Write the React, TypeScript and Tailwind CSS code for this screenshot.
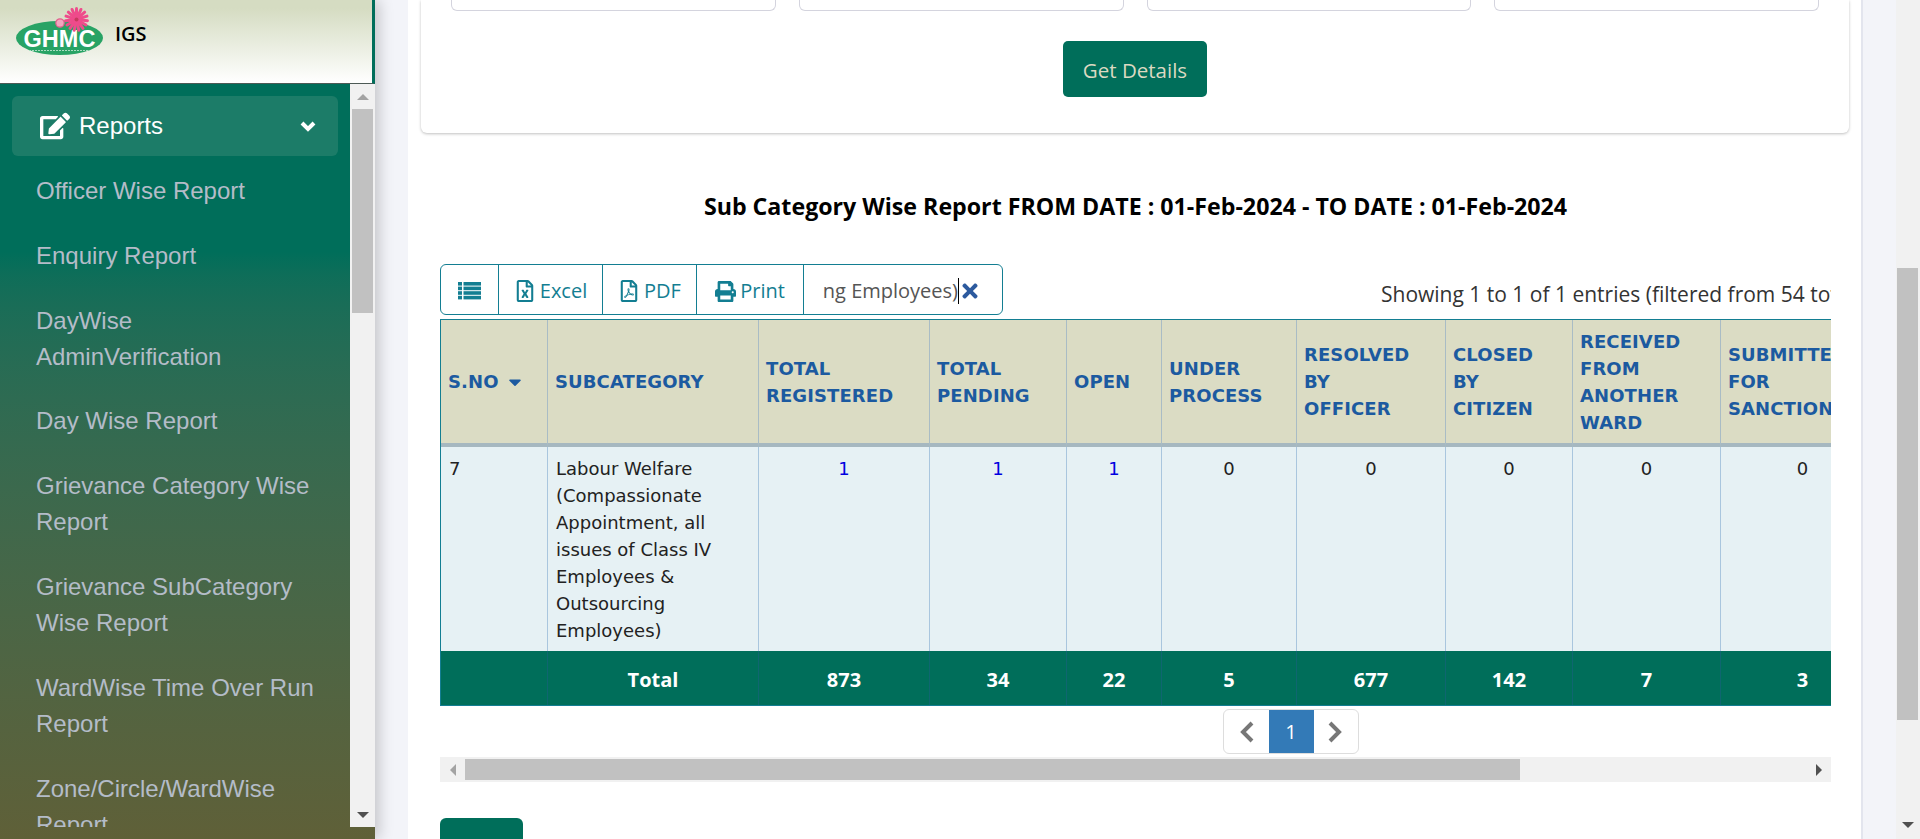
import { FaEdit, FaRegFileExcel, FaRegFilePdf, FaPrint, FaTimes, FaCaretDown } from "react-icons/fa";

const menuItems = [
  { id: 1, label: "Officer Wise Report" },
  { id: 2, label: "Enquiry Report" },
  { id: 3, label: "DayWise AdminVerification" },
  { id: 4, label: "Day Wise Report" },
  { id: 5, label: "Grievance Category Wise Report" },
  { id: 6, label: "Grievance SubCategory Wise Report" },
  { id: 7, label: "WardWise Time Over Run Report" },
  { id: 8, label: "Zone/Circle/WardWise Report" },
];

const columns = [
  { w: "w-[108px]", lines: ["S.NO"], val: "7", total: "" },
  { w: "w-[211px]", lines: ["SUBCATEGORY"], val: "", total: "Total" },
  { w: "w-[171px]", lines: ["TOTAL", "REGISTERED"], val: "1", total: "873", link: true },
  { w: "w-[137px]", lines: ["TOTAL", "PENDING"], val: "1", total: "34", link: true },
  { w: "w-[95px]", lines: ["OPEN"], val: "1", total: "22", link: true },
  { w: "w-[135px]", lines: ["UNDER", "PROCESS"], val: "0", total: "5" },
  { w: "w-[149px]", lines: ["RESOLVED", "BY", "OFFICER"], val: "0", total: "677" },
  { w: "w-[127px]", lines: ["CLOSED", "BY", "CITIZEN"], val: "0", total: "142" },
  { w: "w-[148px]", lines: ["RECEIVED", "FROM", "ANOTHER", "WARD"], val: "0", total: "7" },
  { w: "w-[164px]", lines: ["SUBMITTED", "FOR", "SANCTION"], val: "0", total: "3" },
];

const petals = [0, 24, 48, 72, 96, 120, 144, 168, 192, 216, 240, 264, 288, 312, 336];

const Logo = () => (
  <svg width="90" height="56" viewBox="0 0 90 56" className="shrink-0">
    <ellipse cx="44.5" cy="31" rx="43.5" ry="17" fill="#28a365" />
    <text x="44.5" y="40" textAnchor="middle" fontFamily="Liberation Sans, sans-serif" fontWeight="700" fontSize="23.5" fill="#fff">GHMC</text>
    <line x1="14" y1="43.5" x2="75" y2="43.5" stroke="#a8dcc0" strokeWidth="1" strokeDasharray="2 1" />
    <g stroke="#ee4b8b" strokeWidth="3" strokeLinecap="round">
      {petals.map((a) => (
        <line key={a} x1="61.5" y1="8" x2="61.5" y2="1.5" transform={`rotate(${a} 61.5 12.5)`} />
      ))}
    </g>
    <circle cx="61.5" cy="12.5" r="5" fill="#ee4b8b" />
    <circle cx="61.5" cy="12.5" r="2" fill="#c8395f" />
    <circle cx="45" cy="16" r="4.2" fill="#f3a5bf" stroke="#e2608c" strokeWidth="1.2" />
  </svg>
);

const ListIcon = () => (
  <svg width="23" height="18" viewBox="0 0 23 18" fill="currentColor">
    {[0, 4.6, 9.2, 13.8].map((y) => (
      <g key={y}>
        <rect x="0" y={y} width="4" height="3.6" />
        <rect x="5.5" y={y} width="17.5" height="3.6" />
      </g>
    ))}
  </svg>
);

const Chevron = ({ points, w, h }: { points: string; w: number; h: number }) => (
  <svg width={w} height={h} viewBox={`0 0 ${w} ${h}`} fill="none" stroke="currentColor" strokeWidth="4">
    <polyline points={points} />
  </svg>
);

export default function App() {
  return (
    <div className="flex h-[839px] overflow-hidden bg-[#f3f4f9] font-['Open_Sans',sans-serif]">
      <aside className="relative z-10 flex w-[375px] shrink-0 flex-col bg-gradient-to-b from-[#006e5a] from-30% to-[#5f6038] shadow-[4px_0_14px_rgba(0,0,0,0.2)]">
        <div className="flex h-[84px] items-start border-b border-b-[#4d5a56] border-r-[3px] border-r-[#006e5a] bg-gradient-to-b from-[#d5dcc2] from-10% to-white pl-[15px] pt-[7px]">
          <Logo />
          <span className="ml-[10px] mt-[15px] text-[20px] font-semibold leading-6 text-black">IGS</span>
        </div>
        <div className="flex h-[743px] overflow-hidden">
          <nav className="w-[350px] shrink-0 overflow-hidden pl-3 pr-3 pt-3 font-['Liberation_Sans',sans-serif]">
            <div className="flex h-[60px] items-center justify-between rounded-md bg-[#1c7c68] pl-7 pr-[22px] text-[24px] text-white">
              <span className="flex items-center gap-[9px]">
                <FaEdit className="text-[30px]" />
                Reports
              </span>
              <Chevron points="2,2 8,8 14,2" w={16} h={11} />
            </div>
            <ul className="w-[304px] pl-6 pt-[17px]">
              {menuItems.map((item) => (
                <li key={item.id} className="pb-[28.8px] text-[24px] leading-9 text-[#b4bcc8]">
                  {item.label}
                </li>
              ))}
            </ul>
          </nav>
          <div className="flex w-[25px] shrink-0 flex-col bg-[#f1f1f1] px-[2px]">
            <div className="flex h-[25px] items-center justify-center">
              <div className="h-0 w-0 border-x-[6px] border-b-[6px] border-x-transparent border-b-[#a3a3a3]" />
            </div>
            <div className="h-[204px] bg-[#c1c1c1]" />
            <div className="flex-1" />
            <div className="flex h-[25px] items-center justify-center">
              <div className="h-0 w-0 border-x-[6px] border-t-[6px] border-x-transparent border-t-[#505050]" />
            </div>
          </div>
        </div>
      </aside>

      <main className="ml-[33px] h-[839px] w-[1455px] shrink-0 overflow-hidden border-r-2 border-[#e3e5ee] bg-white">
        <div className="ml-[13px] mr-[12px] h-[133px] rounded-b-md bg-white px-[30px] shadow-[0_1px_3px_rgba(0,0,0,0.25)]">
          <div className="grid grid-cols-4 gap-[23px]">
            {[1, 2, 3, 4].map((n) => (
              <div key={n} className="h-[11px] rounded-b-md border border-t-0 border-[#d4d4de]" />
            ))}
          </div>
          <div className="flex justify-center pt-[30px]">
            <button className="h-[56px] w-[144px] rounded-[5px] bg-[#006e5a] pt-[2px] text-[20.5px] text-[#dbd9c2]">Get Details</button>
          </div>
        </div>

        <div className="ml-[32px] w-[1391px]">
          <h2 className="pt-[58px] text-center text-[23.2px] font-bold leading-[30px] text-black">
            Sub Category Wise Report FROM DATE : 01-Feb-2024 - TO DATE : 01-Feb-2024
          </h2>

          <div className="mt-[43px] flex items-end justify-between">
            <div className="flex h-[51px] w-[563px] rounded-md border border-[#137e92] text-[20px] text-[#137e92]">
              <div className="flex w-[58px] items-center justify-center border-r border-[#137e92] pt-[3px]"><ListIcon /></div>
              <div className="flex w-[104px] items-center justify-center gap-1 border-r border-[#137e92] pt-[3px]"><FaRegFileExcel className="text-[22px]" />Excel</div>
              <div className="flex w-[94px] items-center justify-center gap-1 border-r border-[#137e92] pt-[3px]"><FaRegFilePdf className="text-[22px]" />PDF</div>
              <div className="flex w-[107px] items-center justify-center gap-1 border-r border-[#137e92] pt-[3px]"><FaPrint className="text-[21px]" />Print</div>
              <div className="flex flex-1 items-center pl-[17px] pt-[3px] text-[#555]">
                <span className="w-[137px] whitespace-nowrap text-right">ng Employees)</span>
                <span className="h-[26px] w-px bg-black" />
                <FaTimes className="text-[22px] text-[#2c5a9e]" />
              </div>
            </div>
            <div className="w-[450px] overflow-hidden whitespace-nowrap pb-[7px] text-[21px] leading-7 text-[#333]">
              Showing 1 to 1 of 1 entries (filtered from 54 total entries)
            </div>
          </div>

          <div className="mt-1 flex overflow-hidden border-y border-[#137e92] font-['DejaVu_Sans',sans-serif]">
            {columns.map((c, i) => (
              <div key={i} className={`${c.w} shrink-0 overflow-hidden first:border-l first:border-l-[#137e92]`}>
                <div className="flex h-[127px] items-center whitespace-nowrap border-b-[4px] border-r border-b-[#a6b8c0] border-r-[#a9bcc5] bg-[#dbdcc4] pl-[7px] text-[18px] font-bold leading-[27px] tracking-[0.1px] text-[#1c5aa0]">
                  <div>
                    {c.lines.map((l) => (
                      <div key={l} className="flex items-center gap-[6px]">
                        {l}
                        {i === 0 && <FaCaretDown className="text-[20px]" />}
                      </div>
                    ))}
                  </div>
                </div>
                <div className="h-[204px] border-r border-[#a9c6de] bg-[#e6f1f4] px-2 pt-2 text-[18px] leading-[27px] text-[#222]">
                  {i === 1 ? (
                    <p>Labour Welfare (Compassionate Appointment, all issues of Class IV Employees &amp; Outsourcing Employees)</p>
                  ) : (
                    <p className={`${i === 0 ? "" : "text-center"} ${c.link ? "text-[#0000e0]" : ""}`}>{c.val}</p>
                  )}
                </div>
                <div className="flex h-[54px] items-center justify-center border-r border-[#0f6670] bg-[#006e5a] pt-[3px] font-['Open_Sans',sans-serif] text-[20px] font-bold text-white">
                  {c.total}
                </div>
              </div>
            ))}
          </div>

          <div className="h-[51px] pl-[783px] pt-[3px]">
            <div className="flex h-[45px] w-[136px] items-stretch overflow-hidden rounded-md border border-[#dddddd] text-[#777]">
              <div className="flex flex-1 items-center justify-center"><Chevron points="13,2 4,11 13,20" w={15} h={22} /></div>
              <div className="flex w-[45px] items-center justify-center bg-[#337ab7] text-[20px] text-white">1</div>
              <div className="flex flex-1 items-center justify-center"><Chevron points="2,2 11,11 2,20" w={15} h={22} /></div>
            </div>
          </div>

          <div className="flex h-[25px] items-center bg-[#f1f1f1] py-[2px]">
            <div className="flex w-[25px] items-center justify-center">
              <div className="h-0 w-0 border-y-[6px] border-r-[6px] border-y-transparent border-r-[#a3a3a3]" />
            </div>
            <div className="h-[21px] w-[1055px] bg-[#c1c1c1]" />
            <div className="flex-1" />
            <div className="flex w-[25px] items-center justify-center">
              <div className="h-0 w-0 border-y-[6px] border-l-[6px] border-y-transparent border-l-[#505050]" />
            </div>
          </div>

          <div className="mt-9 h-10 w-[83px] rounded-md bg-[#006e5a]" />
        </div>
      </main>

      <div className="ml-[33px] flex h-[839px] w-[24px] shrink-0 flex-col bg-[#f1f1f1]">
        <div className="ml-px mt-[268px] h-[452px] w-[21px] bg-[#c1c1c1]" />
        <div className="flex-1" />
        <div className="flex h-[28px] items-center justify-center">
          <div className="h-0 w-0 border-x-[6px] border-t-[6px] border-x-transparent border-t-[#505050]" />
        </div>
      </div>
    </div>
  );
}
